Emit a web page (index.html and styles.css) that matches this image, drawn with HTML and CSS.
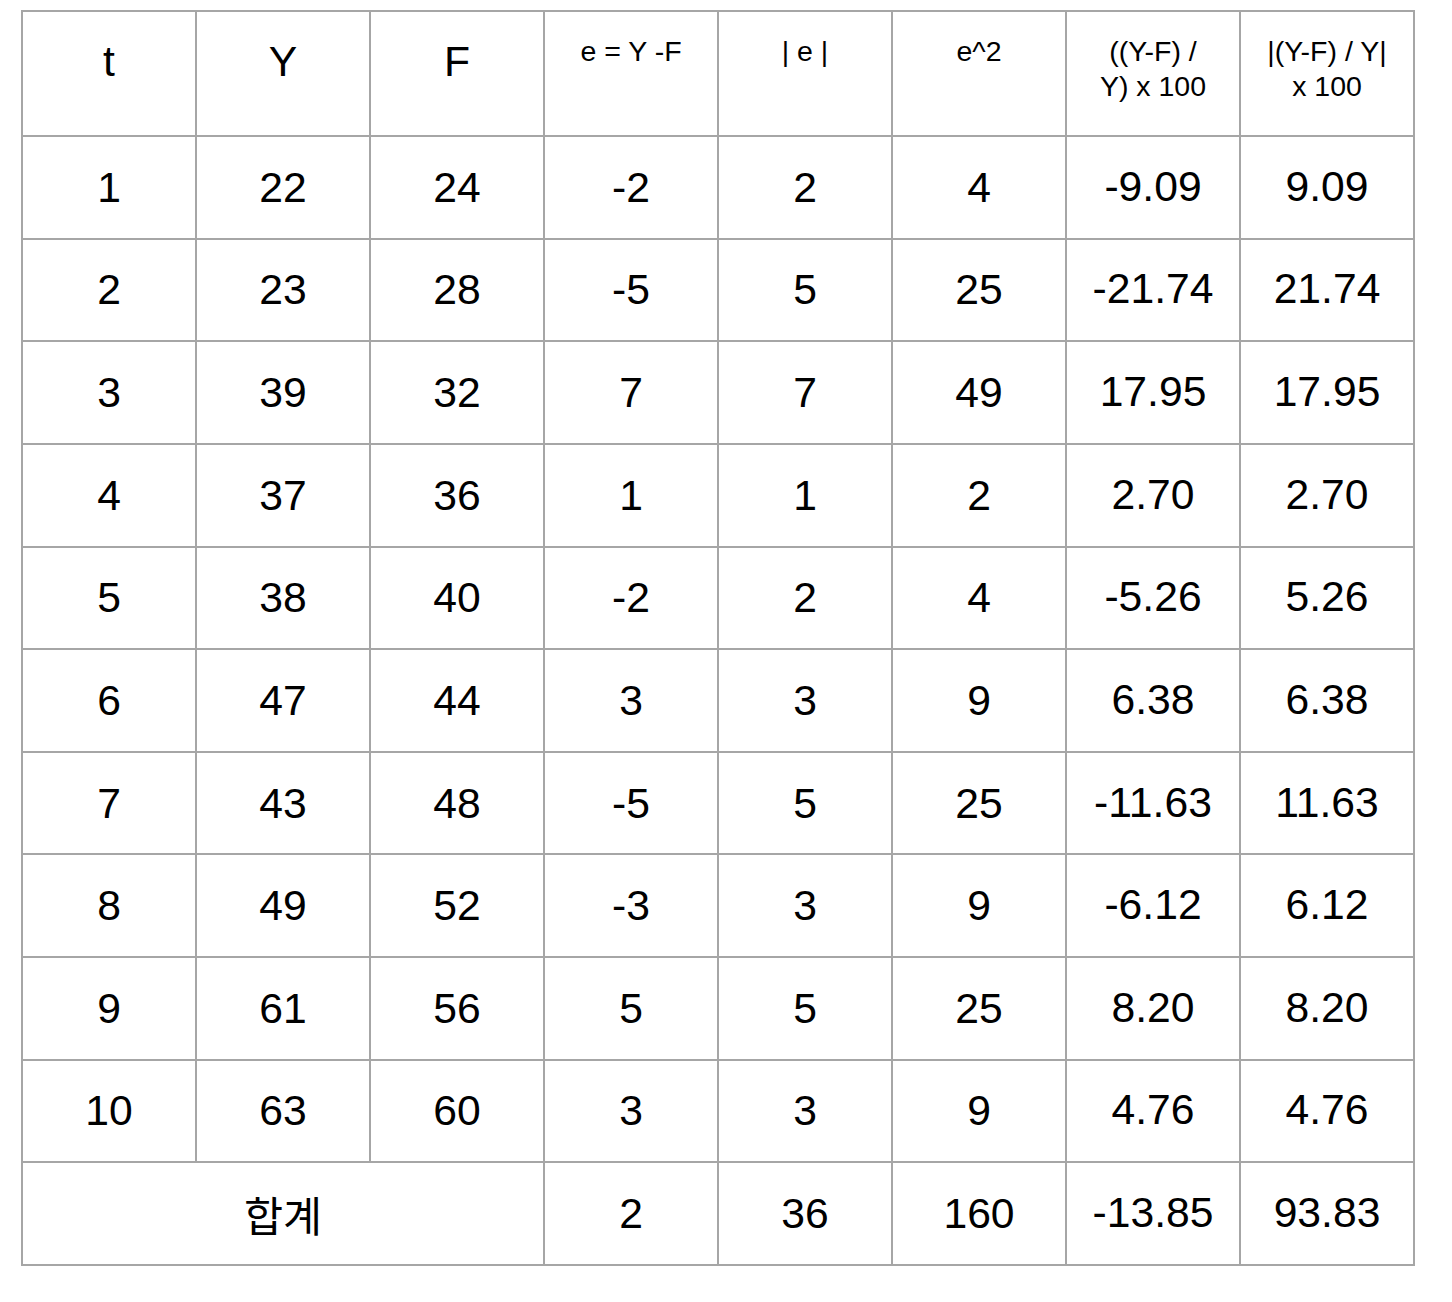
FILE: index.html
```html
<!DOCTYPE html>
<html lang="ko">
<head>
<meta charset="utf-8">
<title>Forecast error table</title>
<link rel="stylesheet" href="styles.css">
</head>
<body>
<table class="err-table">
  <colgroup>
    <col class="c"><col class="c"><col class="c"><col class="c"><col class="c"><col class="c"><col class="c"><col class="c">
  </colgroup>
  <thead>
    <tr class="head">
      <th class="big">t</th>
      <th class="big">Y</th>
      <th class="big">F</th>
      <th class="small">e = Y -F</th>
      <th class="small">| e |</th>
      <th class="small">e^2</th>
      <th class="small">((Y-F) /<br>Y) x 100</th>
      <th class="small">|(Y-F) / Y|<br>x 100</th>
    </tr>
  </thead>
  <tbody>
    <tr><td>1</td><td>22</td><td>24</td><td>-2</td><td>2</td><td>4</td><td class="dec">-9.09</td><td class="dec">9.09</td></tr>
    <tr><td>2</td><td>23</td><td>28</td><td>-5</td><td>5</td><td>25</td><td class="dec">-21.74</td><td class="dec">21.74</td></tr>
    <tr><td>3</td><td>39</td><td>32</td><td>7</td><td>7</td><td>49</td><td class="dec">17.95</td><td class="dec">17.95</td></tr>
    <tr><td>4</td><td>37</td><td>36</td><td>1</td><td>1</td><td>2</td><td class="dec">2.70</td><td class="dec">2.70</td></tr>
    <tr><td>5</td><td>38</td><td>40</td><td>-2</td><td>2</td><td>4</td><td class="dec">-5.26</td><td class="dec">5.26</td></tr>
    <tr><td>6</td><td>47</td><td>44</td><td>3</td><td>3</td><td>9</td><td class="dec">6.38</td><td class="dec">6.38</td></tr>
    <tr><td>7</td><td>43</td><td>48</td><td>-5</td><td>5</td><td>25</td><td class="dec">-11.63</td><td class="dec">11.63</td></tr>
    <tr><td>8</td><td>49</td><td>52</td><td>-3</td><td>3</td><td>9</td><td class="dec">-6.12</td><td class="dec">6.12</td></tr>
    <tr><td>9</td><td>61</td><td>56</td><td>5</td><td>5</td><td>25</td><td class="dec">8.20</td><td class="dec">8.20</td></tr>
    <tr><td>10</td><td>63</td><td>60</td><td>3</td><td>3</td><td>9</td><td class="dec">4.76</td><td class="dec">4.76</td></tr>
    <tr><td colspan="3" class="ko">합계</td><td>2</td><td>36</td><td>160</td><td class="dec">-13.85</td><td class="dec">93.83</td></tr>
  </tbody>
</table>
</body>
</html>
```
FILE: styles.css
```css
html, body {
  margin: 0;
  padding: 0;
  background: #ffffff;
}

body {
  padding: 10px 0 0 21px;
  font-family: "Liberation Sans", Arial, sans-serif;
  color: #000000;
}

.err-table {
  border-collapse: separate;
  border-spacing: 0;
  table-layout: fixed;
  width: 1394px;
  border-top: 2px solid #a6a6a6;
  border-left: 2px solid #a6a6a6;
}

.err-table col.c {
  width: 174px;
}

.err-table th,
.err-table td {
  border-right: 2px solid #a6a6a6;
  border-bottom: 2px solid #a6a6a6;
  padding: 0;
  text-align: center;
  font-weight: normal;
}

.head {
  height: 125px;
}

.head th {
  vertical-align: top;
}

.head th.big {
  padding-top: 25px;
  font-size: 42.67px;
  line-height: 49px;
}

.head th.small {
  padding-top: 22px;
  font-size: 28.5px;
  line-height: 35px;
}

.err-table tbody tr {
  height: 102.64px;
}

.err-table td {
  vertical-align: middle;
  font-size: 42.67px;
  line-height: 49px;
}

.err-table td.dec {
  padding-bottom: 2px;
}

.err-table td.ko {
  font-family: "Noto Sans CJK KR", "Liberation Sans", sans-serif;
  font-size: 42.5px;
  line-height: 49px;
}
```
